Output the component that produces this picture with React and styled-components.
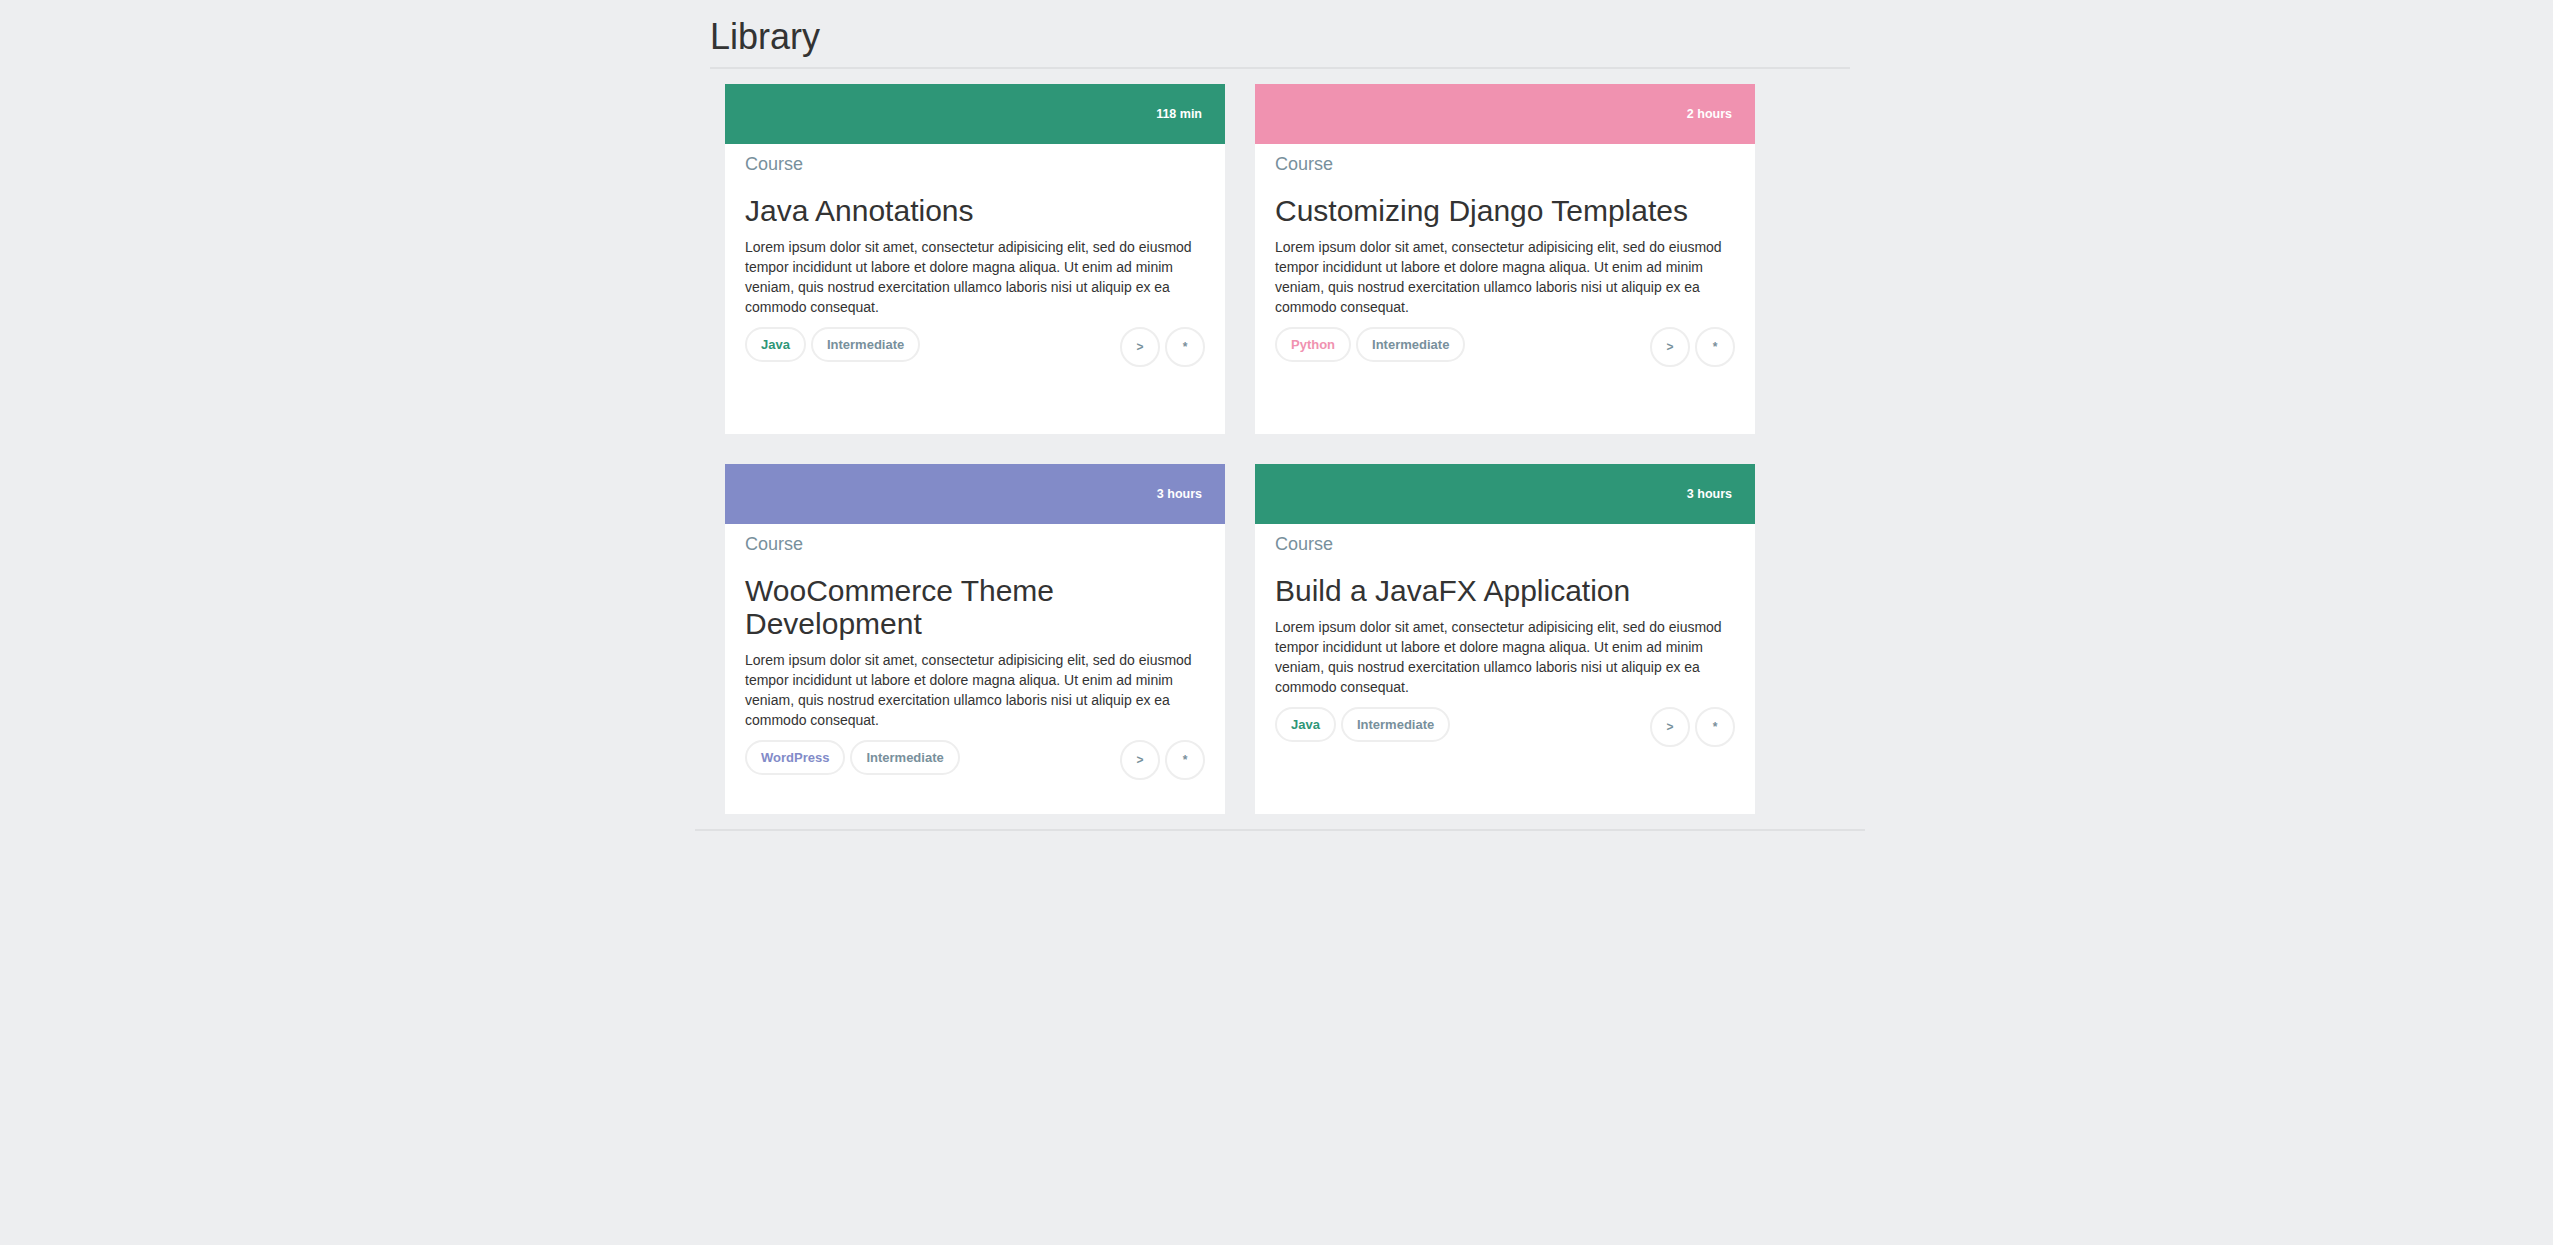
import React from "react";
import styled, { createGlobalStyle } from "styled-components";

const GlobalStyle = createGlobalStyle`
  html, body {
    margin: 0;
    background: #edeef0;
  }
  body {
    padding-left: 7px;
    font-family: "Liberation Sans", Arial, sans-serif;
    color: #333;
  }
  * {
    box-sizing: border-box;
  }
`;

const Container = styled.div`
  width: 1170px;
  margin: 0 auto;
  padding-bottom: 40px;
`;

const Header = styled.header`
  margin: 0 15px;
  padding-top: 17px;
  border-bottom: 2px solid #dfe0e2;
`;

const PageTitle = styled.h1`
  margin: 0 0 10px;
  font-size: 36px;
  line-height: 40px;
  font-weight: 400;
  color: #333;
`;

const CardGrid = styled.div`
  display: grid;
  grid-template-columns: repeat(2, 500px);
  column-gap: 30px;
  row-gap: 30px;
  padding: 15px 30px 0;
`;

const Divider = styled.hr`
  margin: 15px 0 0;
  border: 0;
  height: 2px;
  background: #dfe0e2;
`;

const Card = styled.article`
  height: 350px;
  background: #fff;
  display: flex;
  flex-direction: column;
`;

const Banner = styled.div`
  height: 60px;
  flex-shrink: 0;
  background: ${(p) => p.color};
  display: flex;
  justify-content: flex-end;
  align-items: center;
  padding-right: 23px;
  color: #fff;
  font-size: 12.5px;
  font-weight: 700;
`;

const CardBody = styled.div`
  padding: 10px 20px 0;
`;

const Kind = styled.div`
  font-size: 18px;
  line-height: 20px;
  color: #78909c;
`;

const CardTitle = styled.h3`
  margin: 20px 0 10px;
  font-size: 30px;
  line-height: 33px;
  font-weight: 400;
  color: #333;
`;

const Text = styled.p`
  margin: 0 0 10px;
  font-size: 14px;
  line-height: 20px;
  color: #333;
`;

const Footer = styled.div`
  display: flex;
  justify-content: space-between;
  align-items: flex-start;
`;

const Tags = styled.div`
  display: flex;
  gap: 5px;
`;

const Tag = styled.span`
  height: 35px;
  display: inline-flex;
  align-items: center;
  padding: 0 14px;
  border: 2px solid #eeeeee;
  border-radius: 20px;
  font-size: 13px;
  font-weight: 700;
  color: ${(p) => p.color || "#78909c"};
`;

const Actions = styled.div`
  display: flex;
  gap: 5px;
`;

const RoundButton = styled.button`
  width: 40px;
  height: 40px;
  padding: 0;
  border-radius: 50%;
  border: 2px solid #eeeeee;
  background: #fff;
  font-family: inherit;
  font-size: 12px;
  font-weight: 700;
  color: #78909c;
  cursor: pointer;
`;

const lorem =
  "Lorem ipsum dolor sit amet, consectetur adipisicing elit, sed do eiusmod tempor incididunt ut labore et dolore magna aliqua. Ut enim ad minim veniam, quis nostrud exercitation ullamco laboris nisi ut aliquip ex ea commodo consequat.";

const courses = [
  { title: "Java Annotations", time: "118 min", tag: "Java", color: "#2e9677" },
  { title: "Customizing Django Templates", time: "2 hours", tag: "Python", color: "#f092b0" },
  { title: "WooCommerce Theme Development", time: "3 hours", tag: "WordPress", color: "#828bc8" },
  { title: "Build a JavaFX Application", time: "3 hours", tag: "Java", color: "#2e9677" },
];

const App = () => {
  return (
    <>
      <GlobalStyle />
      <Container>
        <Header>
          <PageTitle>Library</PageTitle>
        </Header>

        <CardGrid>
          {courses.map((c) => (
            <Card key={c.title}>
              <Banner color={c.color}>{c.time}</Banner>
              <CardBody>
                <Kind>Course</Kind>
                <CardTitle>{c.title}</CardTitle>
                <Text>{lorem}</Text>
                <Footer>
                  <Tags>
                    <Tag color={c.color}>{c.tag}</Tag>
                    <Tag>Intermediate</Tag>
                  </Tags>
                  <Actions>
                    <RoundButton>&gt;</RoundButton>
                    <RoundButton>*</RoundButton>
                  </Actions>
                </Footer>
              </CardBody>
            </Card>
          ))}
        </CardGrid>

        <Divider />
      </Container>
    </>
  );
};

export default App;
